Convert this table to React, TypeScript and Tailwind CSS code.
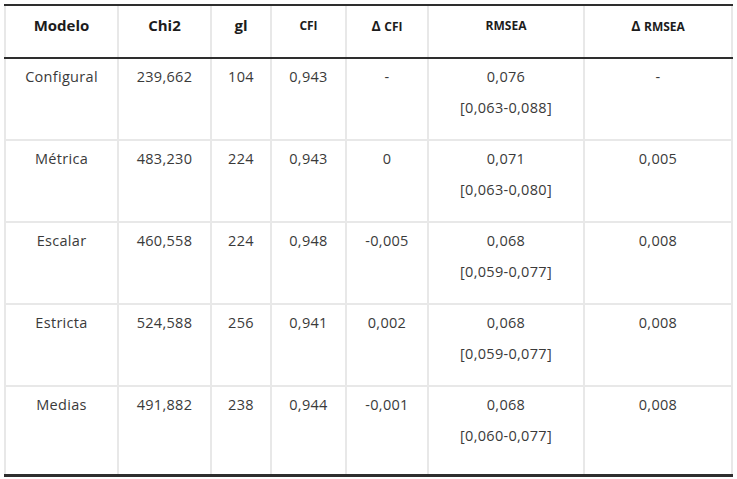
const cols = ['w-[113px]', 'w-[93px]', 'w-[60px]', 'w-[75px]', 'w-[82px]', 'w-[156px]', 'w-[150px]'];

type Row = {
  modelo: string;
  chi2: string;
  gl: string;
  cfi: string;
  dcfi: string;
  rmsea: string;
  ci: string;
  drmsea: string;
};

const rows: Row[] = [
  { modelo: 'Configural', chi2: '239,662', gl: '104', cfi: '0,943', dcfi: '-', rmsea: '0,076', ci: '[0,063-0,088]', drmsea: '-' },
  { modelo: 'Métrica', chi2: '483,230', gl: '224', cfi: '0,943', dcfi: '0', rmsea: '0,071', ci: '[0,063-0,080]', drmsea: '0,005' },
  { modelo: 'Escalar', chi2: '460,558', gl: '224', cfi: '0,948', dcfi: '-0,005', rmsea: '0,068', ci: '[0,059-0,077]', drmsea: '0,008' },
  { modelo: 'Estricta', chi2: '524,588', gl: '256', cfi: '0,941', dcfi: '0,002', rmsea: '0,068', ci: '[0,059-0,077]', drmsea: '0,008' },
  { modelo: 'Medias', chi2: '491,882', gl: '238', cfi: '0,944', dcfi: '-0,001', rmsea: '0,068', ci: '[0,060-0,077]', drmsea: '0,008' },
];

const Cell = ({ i, children, last }: { i: number; children: React.ReactNode; last?: boolean }) => (
  <div className={`${cols[i]} shrink-0 border-l-2 border-[#e8e8e8] ${last ? 'border-r-2' : ''} flex flex-col items-center`}>
    {children}
  </div>
);

export default function App() {
  const headers: { label: string; small?: boolean; delta?: boolean }[] = [
    { label: 'Modelo' },
    { label: 'Chi2' },
    { label: 'gl' },
    { label: 'CFI', small: true },
    { label: 'CFI', small: true, delta: true },
    { label: 'RMSEA', small: true },
    { label: 'RMSEA', small: true, delta: true },
  ];

  return (
    <div className="min-h-[479px] w-[737px] bg-white pl-[4px] pt-[4px] font-['Open_Sans',sans-serif]">
      <div className="w-[729px] border-t-2 border-b-[3px] border-[#2e2e2e]">
        <div className="flex h-[53px] border-b-2 border-[#2e2e2e] text-[#1c1c1c] font-bold">
          {headers.map((h, i) => (
            <Cell key={i} i={i} last={i === 6}>
              <div className={`pt-[4px] leading-[31px] ${h.small ? 'text-[12px]' : 'text-[15px]'}`}>
                {h.delta && <span className="text-[14px]">Δ </span>}
                {h.label}
              </div>
            </Cell>
          ))}
        </div>
        {rows.map((r, idx) => (
          <div
            key={r.modelo}
            className={`flex text-[14.5px] text-[#3a3a3a] leading-[31px] tracking-[0.3px] ${idx === rows.length - 1 ? 'h-[87px]' : 'h-[82px] border-b-2 border-[#e8e8e8]'}`}
          >
            <Cell i={0}><div className="pt-[2px]">{r.modelo}</div></Cell>
            <Cell i={1}><div className="pt-[2px]">{r.chi2}</div></Cell>
            <Cell i={2}><div className="pt-[2px]">{r.gl}</div></Cell>
            <Cell i={3}><div className="pt-[2px]">{r.cfi}</div></Cell>
            <Cell i={4}><div className="pt-[2px]">{r.dcfi}</div></Cell>
            <Cell i={5}>
              <div className="pt-[2px]">{r.rmsea}</div>
              <div>{r.ci}</div>
            </Cell>
            <Cell i={6} last><div className="pt-[2px]">{r.drmsea}</div></Cell>
          </div>
        ))}
      </div>
    </div>
  );
}
